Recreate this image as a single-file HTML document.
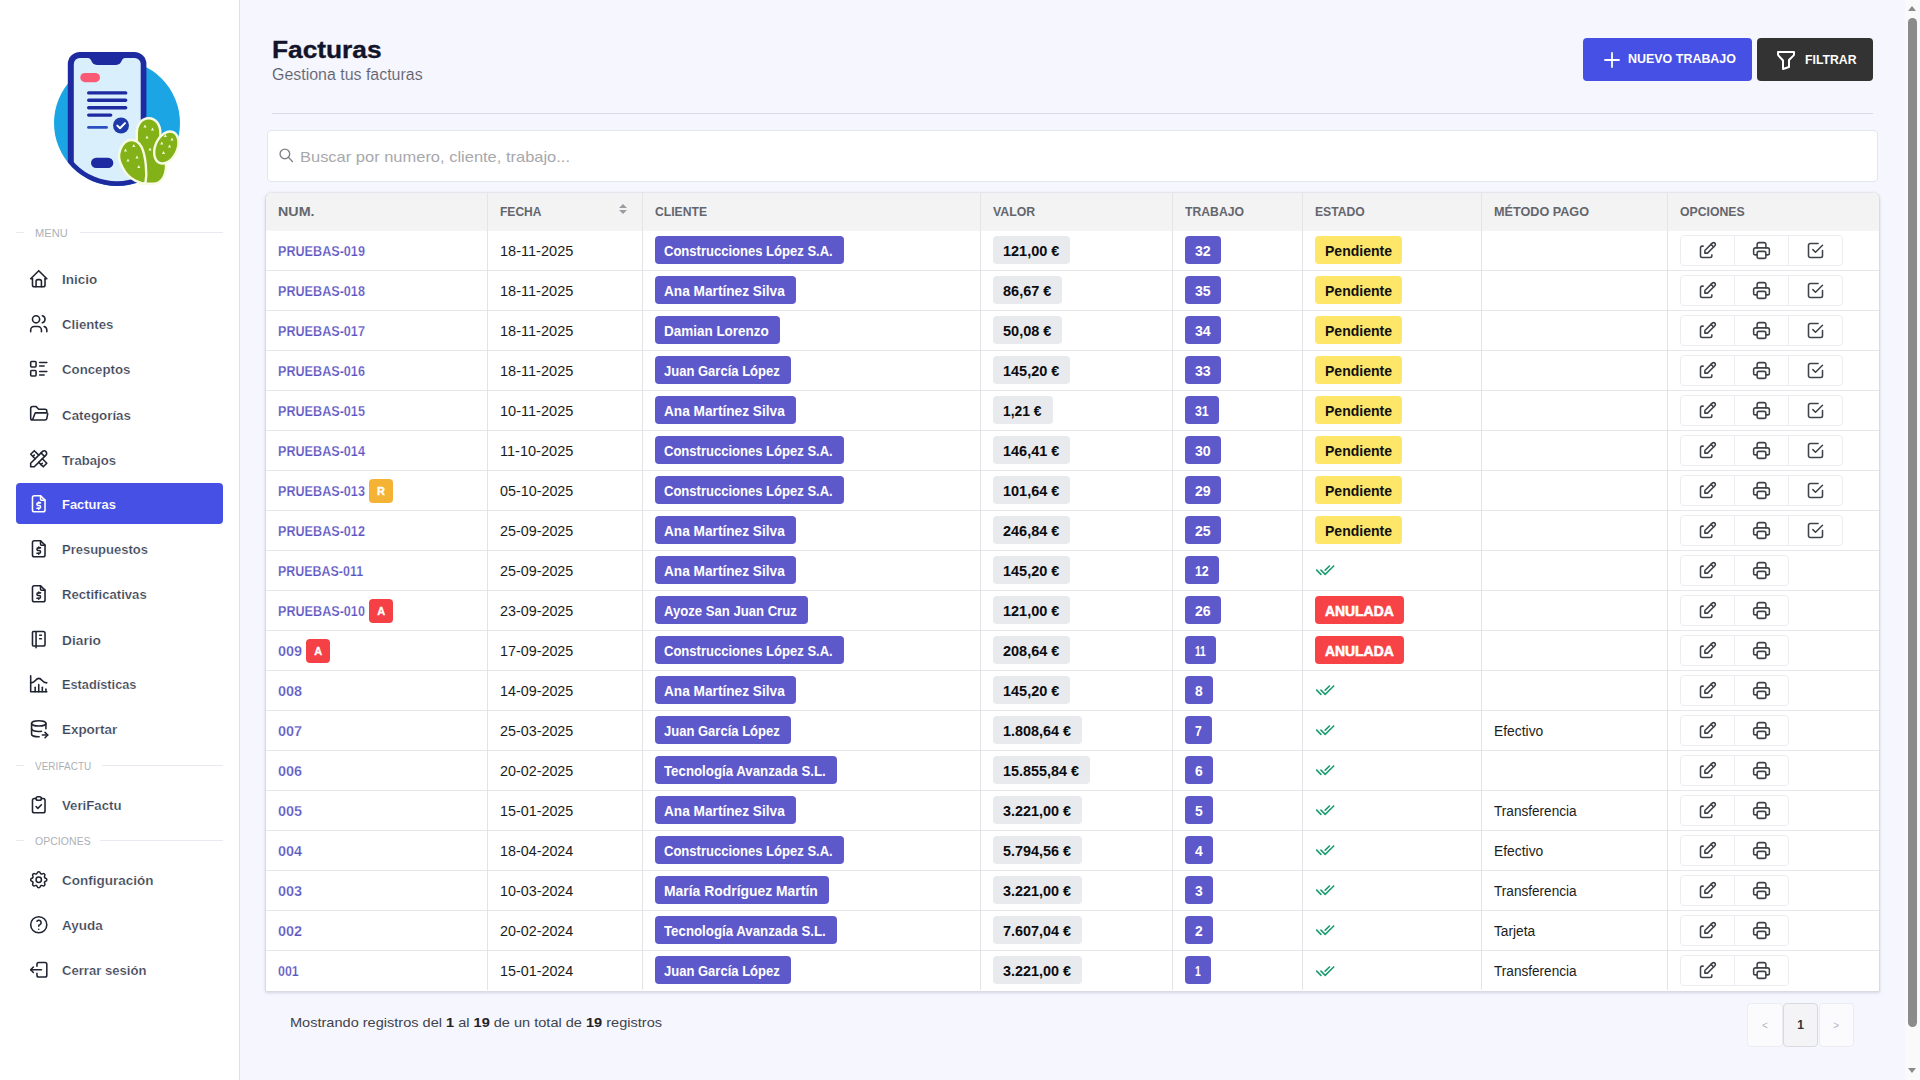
<!DOCTYPE html>
<html lang="es"><head><meta charset="utf-8"><title>Facturas</title>
<style>
*{box-sizing:border-box;margin:0;padding:0}
html,body{width:1920px;height:1080px;overflow:hidden}
body{font-family:"Liberation Sans",sans-serif;background:#f6f6fe;color:#212529;position:relative;font-size:14px}
a{text-decoration:none;color:inherit}
#side{position:absolute;left:0;top:0;width:240px;height:1080px;background:#fff;border-right:1px solid #dedfe9}
#logo{position:absolute;left:40px;top:40px;width:160px;height:160px}
.sec{position:absolute;left:0;width:240px;height:14px}
.sec b{position:absolute;left:35px;top:0;font-size:11px;font-weight:400;color:#adafb5;line-height:14px;letter-spacing:0.1px}
.sec i{position:absolute;top:6px;height:1px;background:#e9eaf1}
.sec .l1{left:16px;width:8px}
.sec .l2{right:17px}
.fx{display:inline-block;transform-origin:0 50%;white-space:nowrap}
.mi{position:absolute;left:16px;width:207px;height:41px;border-radius:4px;color:#3a4354;font-size:13.6px;font-weight:700}
.mi svg{position:absolute;left:12.1px;top:10.3px;color:#1f2430}
.mi>span{position:absolute;left:46.3px;top:0;line-height:45.8px;white-space:nowrap;-webkit-text-stroke:.22px #fff}
.mi.act>span{-webkit-text-stroke:.1px #4650e5}
.mi.act{background:#4650e5;color:#fff}
.mi.act svg{color:#fff}
#main{position:absolute;left:240px;top:0;width:1665px;height:1080px}
#main>*{position:absolute}
h1{left:32px;top:34px;font-size:24px;line-height:32px;font-weight:700;color:#12142a;-webkit-text-stroke:.35px #12142a}
#sub{left:32px;top:65.2px;font-size:16px;line-height:20px;color:#5d616c;-webkit-text-stroke:.12px #f6f6fe}
#bnew,#bfil{top:38px;height:43px;border-radius:4px;color:#fff;font-weight:700;font-size:12px}
#bnew{left:1343px;width:169px;background:#4650e5}
#bfil{left:1517px;width:116px;background:#333}
#bnew svg{position:absolute;left:17px;top:10px}
#bnew>span{position:absolute;left:45px;top:0;line-height:42px}
#bfil svg{position:absolute;left:17px;top:10px}
#bfil>span{position:absolute;left:48px;top:0;line-height:44px}
#hr{left:32px;top:113px;width:1601px;height:1px;background:#d9dbe7}
#search{left:27px;top:130px;width:1611px;height:52px;background:#fff;border:1px solid #e4e5ee;border-radius:4px}
#search svg{position:absolute;left:10.1px;top:16.4px;color:#808289}
#search>span{position:absolute;left:31.5px;top:0;line-height:52px;font-size:15px;color:#a7a8ac}
#tw{left:25px;top:192px;width:1615px;height:800px;background:#fff;border-radius:7px 7px 2px 2px;border:1px solid #dadbe2;border-top-color:#e6e7ec;box-shadow:0 1px 3px rgba(120,120,160,.25);overflow:hidden}
table{border-collapse:collapse;table-layout:fixed;width:1614px;margin:-1px 0 0 -1px}
th{height:38px;background:#f3f3f4;text-align:left;padding:1.4px 0 0 12.5px;font-size:13.4px;font-weight:700;color:#63666d;border-left:1px solid #e4e5e8;position:relative}
td{height:40px;padding:0 0 0 12.5px;border-left:1px solid #e3e4e8;border-top:1px solid #e6e7ea;font-size:14px;color:#1b1d21;white-space:nowrap;vertical-align:middle}
th:first-child,td:first-child{border-left:0;padding-left:13px}
td>.fx,.num{position:relative;top:1px}
tbody tr:first-child td{border-top-color:#f6f6f7}
.num .fx{top:0}
.num{color:#5b52c2;font-weight:700;-webkit-text-stroke:.25px #fff}
.nw{display:inline-flex;align-items:center;height:24px;position:relative;top:1px}
.nw .num{top:0}
.bd{display:inline-block;height:28px;line-height:30px;padding:0 10px;white-space:nowrap;border-radius:4px;font-weight:700;font-size:14px;vertical-align:middle}
.cli,.trab{background:#5e59cb;color:#fff}
.trab{padding-right:10.6px}
.cli{padding-left:9.4px;padding-right:10.6px}
.val{background:#e9eaee;color:#0c0c0e;padding-right:11px}
.pend{background:#fde668;color:#111}
.anul{background:#f84346;color:#fff;-webkit-text-stroke:.55px #fff;padding-right:10.5px}
.fl{display:inline-block;width:24px;height:24px;line-height:24.5px;text-align:center;border-radius:4px;color:#fff;font-weight:700;font-size:11px;margin-left:4px;-webkit-text-stroke:.3px #fff}
.fa{width:24.5px}
.fr{background:#f5b335}
.fa{background:#f54046}
.chk{color:#1e9c74;vertical-align:middle;margin-left:0;position:relative;top:.5px}
.bg{display:inline-flex;border:1px solid #ecedf1;border-radius:4px;height:31px;vertical-align:middle}
.b{display:inline-block;width:53.5px;height:29px;border-left:1px solid #ecedf1;text-align:center;color:#3f4249}
.b:first-child{border-left:0;width:52.7px}
.b:nth-child(2){width:54.1px}
.b:nth-child(3){width:54.6px}
.b svg{margin-top:4px}
.sort{position:absolute;right:15px;top:12px;width:8px;height:12px}
.sort i{position:absolute;left:0;width:0;height:0;border-left:4px solid transparent;border-right:4px solid transparent}
.sort .up{top:0;border-bottom:4.5px solid #9a9ca3}
.sort .dn{top:6px;border-top:4.5px solid #9a9ca3}
#info{left:50px;top:1013px;font-size:13.5px;line-height:20px;color:#40434a}
#info b{color:#222}
#pag{left:1507.3px;top:1003px;height:43.5px;white-space:nowrap;font-size:0}
.pg{display:inline-block;width:35.4px;height:43.5px;line-height:43px;text-align:center;border:1px solid #ececf3;border-radius:4px;background:#fbfbfe;color:#b3b4ba;font-size:10px;margin-right:.25px}
.pg.cur{background:#f4f4f6;border-color:#d9dae0;color:#333;font-weight:700;font-size:12px}
#sb{position:absolute;left:1905px;top:0;width:15px;height:1080px;background:#fafafa}
#sb .th{position:absolute;left:3px;top:18px;width:9px;height:1009px;border-radius:4.5px;background:#8b8b8b}
#sb .au,#sb .ad{position:absolute;left:3px;width:0;height:0;border-left:4.5px solid transparent;border-right:4.5px solid transparent}
#sb .au{top:6px;border-bottom:5px solid #8b8b8b}
#sb .ad{top:1068px;border-top:5px solid #8b8b8b}

</style></head><body>
<div id="side">
<div id="logo"><svg width="160" height="160" viewBox="40 40 160 160">
<defs><clipPath id="cc"><path d="M40 40H200V123H180A63 63 0 0 1 54 123H40Z"/></clipPath>
<clipPath id="cs"><path d="M40 40H200V123H175.300A58.300 58.300 0 0 1 58.700 123H40Z"/></clipPath><clipPath id="cb"><path d="M100 100H200V183.800H100Z"/></clipPath></defs>
<circle cx="117" cy="123" r="63" fill="#1ba5e5"/>
<g clip-path="url(#cc)"><rect x="67.800" y="51.900" width="78.600" height="150" rx="12" fill="#1e2aa0"/></g>
<g clip-path="url(#cs)"><rect x="73.800" y="58" width="66.900" height="150" rx="6" fill="#d9f0fc"/></g>
<path d="M88 57h37v1c-1.500 0-2.500 1-3.200 2.600c-1 2.600-2.600 4.400-5.800 4.400h-19c-3.200 0-4.800-1.800-5.800-4.400c-.7-1.600-1.700-2.600-3.200-2.600z" fill="#1e2aa0"/>
<rect x="80.300" y="72.900" width="19.700" height="9.300" rx="4.650" fill="#fb5a74"/>
<g stroke="#1e2aa0" stroke-width="3.400" stroke-linecap="round"><path d="M88.700 92.900h37M88.700 100.300h37M88.700 107.700h37M88.700 115.100h22"/></g>
<path d="M88.500 127.400h18" stroke="#2b4fc0" stroke-width="2.800" stroke-linecap="round"/>
<circle cx="121" cy="125.500" r="8" fill="#1f3aa8"/>
<path d="M117.300 125.600l2.700 2.700l5-5.200" fill="none" stroke="#fff" stroke-width="2" stroke-linecap="round" stroke-linejoin="round"/>
<rect x="91" y="157.800" width="22.300" height="10.300" rx="5.150" fill="#1e2aa0"/>
<g fill="#82b118" stroke="#f7fbe3" stroke-width="2.400" stroke-linejoin="round">
<path d="M148.700 118.200C155.800 118.200 160.600 124.500 160.400 134C160.200 142 162.300 150 164.800 158C166.800 165 166.300 172 163.300 177.500C160.800 182 157 183.800 153 183.800L140 183.800C137 183.800 136.800 175 136.800 165L136.800 133C136.800 124.500 141.800 118.200 148.700 118.200Z"/>
<ellipse cx="166.300" cy="147.500" rx="11" ry="16.800" transform="rotate(24 166.300 147.500)"/>
<path d="M131.500 140C127.500 140 123 143 120.500 149C118 155 119.500 162 122.200 166.700C125 172.500 130 178 135.200 180.600C138.500 182.300 141.500 183.500 145.400 183.500C146.400 178 146.400 170 145.800 164.800C145 157 143.500 151 141.700 147.200C139.500 143 136 140 131.500 140Z"/>
</g>
<g fill="#eef8cc"><path d="M145 124.500l1.600 3.100h-3.200zM152.500 127.500l1.600 3.100h-3.200zM147 135.500l1.600 3.100h-3.200zM150 147.500l1.600 3.100h-3.200zM125.500 148.500l1.600 3.100h-3.200zM133.800 144l1.600 3.100h-3.200zM137 155.500l1.600 3.100h-3.200zM128 158.500l1.600 3.100h-3.200zM138.800 165l1.600 3.100h-3.200zM165.300 134l1.600 3.100h-3.200zM172 137.500l1.600 3.100h-3.200zM161.800 141.500l1.600 3.100h-3.200zM169.500 144.500l1.600 3.100h-3.200zM163.500 151l1.600 3.100h-3.200z"/></g>
</svg>
</div>
<div class="sec" style="top:226px"><i class="l1"></i><b><span class="fx" style="transform:scaleX(1.0034);margin-right:0.11px">MENU</span></b><i class="l2" style="left:80px"></i></div>
<div class="sec" style="top:759px"><i class="l1"></i><b><span class="fx" style="transform:scaleX(0.8990);margin-right:-6.23px">VERIFACTU</span></b><i class="l2" style="left:102px"></i></div>
<div class="sec" style="top:834px"><i class="l1"></i><b><span class="fx" style="transform:scaleX(0.9470);margin-right:-3.08px">OPCIONES</span></b><i class="l2" style="left:100px"></i></div>
<a class="mi" style="top:258px"><svg class="mic" width="21.5" height="21.5" viewBox="0 0 24 24" fill="none" stroke="currentColor" stroke-width="1.75" stroke-linecap="round" stroke-linejoin="round" ><path d="M5 12l-2 0l9 -9l9 9l-2 0"/><path d="M5 12v7a2 2 0 0 0 2 2h10a2 2 0 0 0 2 -2v-7"/><path d="M9 21v-6a2 2 0 0 1 2 -2h2a2 2 0 0 1 2 2v6"/></svg><span style="top:-1px"><span class="fx" style="transform:scaleX(0.9915);margin-right:-0.30px">Inicio</span></span></a>
<a class="mi" style="top:303px"><svg class="mic" width="21.5" height="21.5" viewBox="0 0 24 24" fill="none" stroke="currentColor" stroke-width="1.75" stroke-linecap="round" stroke-linejoin="round" ><path d="M9 7m-4 0a4 4 0 1 0 8 0a4 4 0 1 0 -8 0"/><path d="M3 21v-2a4 4 0 0 1 4 -4h4a4 4 0 0 1 4 4v2"/><path d="M16 3.13a4 4 0 0 1 0 7.75"/><path d="M21 21v-2a4 4 0 0 0 -3 -3.85"/></svg><span style="top:-1px"><span class="fx" style="transform:scaleX(0.9728);margin-right:-1.44px">Clientes</span></span></a>
<a class="mi" style="top:348px"><svg class="mic" width="21.5" height="21.5" viewBox="0 0 24 24" fill="none" stroke="currentColor" stroke-width="1.75" stroke-linecap="round" stroke-linejoin="round" ><path d="M13 5h8"/><path d="M13 9h5"/><path d="M13 15h8"/><path d="M13 19h5"/><path d="M3 4m0 1a1 1 0 0 1 1 -1h4a1 1 0 0 1 1 1v4a1 1 0 0 1 -1 1h-4a1 1 0 0 1 -1 -1z"/><path d="M3 14m0 1a1 1 0 0 1 1 -1h4a1 1 0 0 1 1 1v4a1 1 0 0 1 -1 1h-4a1 1 0 0 1 -1 -1z"/></svg><span style="top:-1px"><span class="fx" style="transform:scaleX(0.9744);margin-right:-1.80px">Conceptos</span></span></a>
<a class="mi" style="top:393px"><svg class="mic" width="21.5" height="21.5" viewBox="0 0 24 24" fill="none" stroke="currentColor" stroke-width="1.75" stroke-linecap="round" stroke-linejoin="round" ><path d="M5 19l2.757 -7.351a1 1 0 0 1 .936 -.649h12.307a1 1 0 0 1 .986 1.164l-.996 5.211a2 2 0 0 1 -1.964 1.625h-14.026a2 2 0 0 1 -2 -2v-11a2 2 0 0 1 2 -2h4l3 3h7a2 2 0 0 1 2 2v2"/></svg><span><span class="fx" style="transform:scaleX(0.9813);margin-right:-1.32px">Categorías</span></span></a>
<a class="mi" style="top:438px"><svg class="mic" width="21.5" height="21.5" viewBox="0 0 24 24" fill="none" stroke="currentColor" stroke-width="1.75" stroke-linecap="round" stroke-linejoin="round" ><path d="M3 21h4l13 -13a1.5 1.5 0 0 0 -4 -4l-13 13v4"/><path d="M14.5 5.5l4 4"/><path d="M12 8l-5 -5l-4 4l5 5"/><path d="M7 8l-1.5 1.5"/><path d="M16 12l5 5l-4 4l-5 -5"/><path d="M16 17l-1.5 1.5"/></svg><span><span class="fx" style="transform:scaleX(0.9647);margin-right:-1.97px">Trabajos</span></span></a>
<a class="mi act" style="top:483px"><svg class="mic" width="21.5" height="21.5" viewBox="0 0 24 24" fill="none" stroke="currentColor" stroke-width="1.75" stroke-linecap="round" stroke-linejoin="round" ><path d="M14 3v4a1 1 0 0 0 1 1h4"/><path d="M17 21h-10a2 2 0 0 1 -2 -2v-14a2 2 0 0 1 2 -2h7l5 5v11a2 2 0 0 1 -2 2z"/><path d="M14 11h-2.5a1.5 1.5 0 0 0 0 3h1a1.5 1.5 0 0 1 0 3h-2.5"/><path d="M12 17v1m0 -8v1"/></svg><span style="top:-1px"><span class="fx" style="transform:scaleX(0.9520);margin-right:-2.72px">Facturas</span></span></a>
<a class="mi" style="top:528px"><svg class="mic" width="21.5" height="21.5" viewBox="0 0 24 24" fill="none" stroke="currentColor" stroke-width="1.75" stroke-linecap="round" stroke-linejoin="round" ><path d="M14 3v4a1 1 0 0 0 1 1h4"/><path d="M17 21h-10a2 2 0 0 1 -2 -2v-14a2 2 0 0 1 2 -2h7l5 5v11a2 2 0 0 1 -2 2z"/><path d="M14 11h-2.5a1.5 1.5 0 0 0 0 3h1a1.5 1.5 0 0 1 0 3h-2.5"/><path d="M12 17v1m0 -8v1"/></svg><span style="top:-1px"><span class="fx" style="transform:scaleX(0.9560);margin-right:-3.96px">Presupuestos</span></span></a>
<a class="mi" style="top:573px"><svg class="mic" width="21.5" height="21.5" viewBox="0 0 24 24" fill="none" stroke="currentColor" stroke-width="1.75" stroke-linecap="round" stroke-linejoin="round" ><path d="M14 3v4a1 1 0 0 0 1 1h4"/><path d="M17 21h-10a2 2 0 0 1 -2 -2v-14a2 2 0 0 1 2 -2h7l5 5v11a2 2 0 0 1 -2 2z"/><path d="M14 11h-2.5a1.5 1.5 0 0 0 0 3h1a1.5 1.5 0 0 1 0 3h-2.5"/><path d="M12 17v1m0 -8v1"/></svg><span style="top:-1px"><span class="fx" style="transform:scaleX(0.9663);margin-right:-2.96px">Rectificativas</span></span></a>
<a class="mi" style="top:618px"><svg class="mic" width="21.5" height="21.5" viewBox="0 0 24 24" fill="none" stroke="currentColor" stroke-width="1.75" stroke-linecap="round" stroke-linejoin="round" ><path d="M6 4h11a2 2 0 0 1 2 2v12a2 2 0 0 1 -2 2h-11a1 1 0 0 1 -1 -1v-14a1 1 0 0 1 1 -1m3 0v18"/><path d="M13 8l2 0"/><path d="M13 12l2 0"/></svg><span><span class="fx" style="transform:scaleX(1.0109);margin-right:0.42px">Diario</span></span></a>
<a class="mi" style="top:663px"><svg class="mic" width="21.5" height="21.5" viewBox="0 0 24 24" fill="none" stroke="currentColor" stroke-width="1.75" stroke-linecap="round" stroke-linejoin="round" ><path d="M3 3v18h18"/><path d="M20 18v3"/><path d="M16 16v5"/><path d="M12 13v8"/><path d="M8 16v5"/><path d="M3 11c6 0 5 -5 9 -5s3 5 9 5"/></svg><span style="top:-1px"><span class="fx" style="transform:scaleX(0.9383);margin-right:-4.89px">Estadísticas</span></span></a>
<a class="mi" style="top:708px"><svg class="mic" width="21.5" height="21.5" viewBox="0 0 24 24" fill="none" stroke="currentColor" stroke-width="1.75" stroke-linecap="round" stroke-linejoin="round" ><path d="M4 6c0 1.657 3.582 3 8 3s8 -1.343 8 -3s-3.582 -3 -8 -3s-8 1.343 -8 3"/><path d="M4 6v6c0 1.657 3.582 3 8 3c1.118 0 2.183 -.086 3.15 -.241"/><path d="M20 12v-6"/><path d="M4 12v6c0 1.657 3.582 3 8 3c.157 0 .312 -.002 .466 -.005"/><path d="M16 19h6"/><path d="M19 16l3 3l-3 3"/></svg><span style="top:-1px"><span class="fx" style="transform:scaleX(0.9874);margin-right:-0.71px">Exportar</span></span></a>
<a class="mi" style="top:784px"><svg class="mic" width="21.5" height="21.5" viewBox="0 0 24 24" fill="none" stroke="currentColor" stroke-width="1.75" stroke-linecap="round" stroke-linejoin="round" ><path d="M9 5h-2a2 2 0 0 0 -2 2v12a2 2 0 0 0 2 2h10a2 2 0 0 0 2 -2v-12a2 2 0 0 0 -2 -2h-2"/><path d="M9 3m0 2a2 2 0 0 1 2 -2h2a2 2 0 0 1 2 2v0a2 2 0 0 1 -2 2h-2a2 2 0 0 1 -2 -2z"/><path d="M9 14l2 2l4 -4"/></svg><span style="top:-1px"><span class="fx" style="transform:scaleX(0.9714);margin-right:-1.75px">VeriFactu</span></span></a>
<a class="mi" style="top:859px"><svg class="mic" width="21.5" height="21.5" viewBox="0 0 24 24" fill="none" stroke="currentColor" stroke-width="1.75" stroke-linecap="round" stroke-linejoin="round" ><path d="M10.325 4.317c.426 -1.756 2.924 -1.756 3.35 0a1.724 1.724 0 0 0 2.573 1.066c1.543 -.94 3.31 .826 2.37 2.37a1.724 1.724 0 0 0 1.065 2.572c1.756 .426 1.756 2.924 0 3.35a1.724 1.724 0 0 0 -1.066 2.573c.94 1.543 -.826 3.31 -2.37 2.37a1.724 1.724 0 0 0 -2.572 1.065c-.426 1.756 -2.924 1.756 -3.35 0a1.724 1.724 0 0 0 -2.573 -1.066c-1.543 .94 -3.31 -.826 -2.37 -2.37a1.724 1.724 0 0 0 -1.065 -2.572c-1.756 -.426 -1.756 -2.924 0 -3.35a1.724 1.724 0 0 0 1.066 -2.573c-.94 -1.543 .826 -3.31 2.37 -2.37c1 .608 2.296 .07 2.572 -1.065z"/><path d="M9 12a3 3 0 1 0 6 0a3 3 0 0 0 -6 0"/></svg><span style="top:-1px"><span class="fx" style="transform:scaleX(0.9925);margin-right:-0.69px">Configuración</span></span></a>
<a class="mi" style="top:904px"><svg class="mic" width="21.5" height="21.5" viewBox="0 0 24 24" fill="none" stroke="currentColor" stroke-width="1.75" stroke-linecap="round" stroke-linejoin="round" ><path d="M12 12m-9 0a9 9 0 1 0 18 0a9 9 0 1 0 -18 0"/><path d="M12 17l0 .01"/><path d="M12 13.5a1.5 1.5 0 0 1 1 -1.5a2.6 2.6 0 1 0 -3 -4"/></svg><span style="top:-1px"><span class="fx" style="transform:scaleX(0.9915);margin-right:-0.35px">Ayuda</span></span></a>
<a class="mi" style="top:949px"><svg class="mic" width="21.5" height="21.5" viewBox="0 0 24 24" fill="none" stroke="currentColor" stroke-width="1.75" stroke-linecap="round" stroke-linejoin="round" ><path d="M10 8v-2a2 2 0 0 1 2 -2h7a2 2 0 0 1 2 2v12a2 2 0 0 1 -2 2h-7a2 2 0 0 1 -2 -2v-2"/><path d="M15 12h-12l3 -3"/><path d="M6 15l-3 -3"/></svg><span style="top:-1px"><span class="fx" style="transform:scaleX(0.9634);margin-right:-3.21px">Cerrar sesión</span></span></a>
</div>
<div id="main">
<h1><span class="fx" style="transform:scaleX(1.0955);margin-right:9.55px">Facturas</span></h1>
<p id="sub"><span class="fx" style="transform:scaleX(0.9961);margin-right:-0.59px">Gestiona tus facturas</span></p>
<a id="bnew"><svg class="" width="24" height="24" viewBox="0 0 24 24" fill="none" stroke="currentColor" stroke-width="1.8" stroke-linecap="round" stroke-linejoin="round" ><path d="M12 5l0 14"/><path d="M5 12l14 0"/></svg><span><span class="fx" style="transform:scaleX(1.0383);margin-right:3.98px">NUEVO TRABAJO</span></span></a>
<a id="bfil"><svg class="" width="24" height="24" viewBox="0 0 24 24" fill="none" stroke="currentColor" stroke-width="2" stroke-linecap="round" stroke-linejoin="round" ><path d="M4 4h16v2.172a2 2 0 0 1 -.586 1.414l-4.414 4.414v7l-6 2v-8.5l-4.48 -4.928a2 2 0 0 1 -.52 -1.345v-2.227z"/></svg><span><span class="fx" style="transform:scaleX(1.0211);margin-right:1.06px">FILTRAR</span></span></a>
<div id="hr"></div>
<div id="search"><svg class="" width="16.5" height="16.5" viewBox="0 0 24 24" fill="none" stroke="currentColor" stroke-width="2" stroke-linecap="round" stroke-linejoin="round" ><path d="M10 10m-7 0a7 7 0 1 0 14 0a7 7 0 1 0 -14 0"/><path d="M21 21l-6 -6"/></svg><span><span class="fx" style="transform:scaleX(1.0977);margin-right:24.03px">Buscar por numero, cliente, trabajo...</span></span></div>
<div id="tw"><table>
<colgroup><col style="width:222px"><col style="width:155px"><col style="width:338px"><col style="width:192px"><col style="width:130px"><col style="width:179px"><col style="width:186px"><col style="width:212px"></colgroup>
<thead><tr><th><span class="fx" style="transform:scaleX(1.0667);margin-right:2.28px">NUM.</span></th><th><span class="fx" style="transform:scaleX(0.8997);margin-right:-4.62px">FECHA</span><span class="sort"><i class="up"></i><i class="dn"></i></span></th><th><span class="fx" style="transform:scaleX(0.9076);margin-right:-5.30px">CLIENTE</span></th><th><span class="fx" style="transform:scaleX(0.9210);margin-right:-3.62px">VALOR</span></th><th><span class="fx" style="transform:scaleX(0.9114);margin-right:-5.73px">TRABAJO</span></th><th><span class="fx" style="transform:scaleX(0.9076);margin-right:-5.06px">ESTADO</span></th><th><span class="fx" style="transform:scaleX(0.9435);margin-right:-5.69px">MÉTODO PAGO</span></th><th><span class="fx" style="transform:scaleX(0.9153);margin-right:-5.99px">OPCIONES</span></th></tr></thead>
<tbody>
<tr><td><span class="nw"><a class="num"><span class="fx" style="transform:scaleX(0.9007);margin-right:-9.58px">PRUEBAS-019</span></a></span></td><td><span class="fx" style="transform:scaleX(1.0386);margin-right:2.72px">18-11-2025</span></td><td><span class="bd cli"><span class="fx" style="transform:scaleX(0.9310);margin-right:-12.50px">Construcciones López S.A.</span></span></td><td><span class="bd val"><span class="fx" style="transform:scaleX(1.0349);margin-right:1.90px">121,00 €</span></span></td><td><span class="bd trab"><span class="fx" style="transform:scaleX(1.0110);margin-right:0.17px">32</span></span></td><td><span class="bd pend"><span class="fx" style="transform:scaleX(1.0014);margin-right:0.09px">Pendiente</span></span></td><td></td><td><span class="bg"><span class="b"><svg class="" width="21" height="21" viewBox="0 0 24 24" fill="none" stroke="currentColor" stroke-width="1.78" stroke-linecap="round" stroke-linejoin="round" ><path d="M7 7h-1a2 2 0 0 0 -2 2v9a2 2 0 0 0 2 2h9a2 2 0 0 0 2 -2v-1"/><path d="M20.385 6.585a2.1 2.1 0 0 0 -2.97 -2.97l-8.415 8.385v3h3l8.385 -8.415z"/><path d="M16 5l3 3"/></svg></span><span class="b"><svg class="" width="21" height="21" viewBox="0 0 24 24" fill="none" stroke="currentColor" stroke-width="1.78" stroke-linecap="round" stroke-linejoin="round" ><path d="M17 17h2a2 2 0 0 0 2 -2v-4a2 2 0 0 0 -2 -2h-14a2 2 0 0 0 -2 2v4a2 2 0 0 0 2 2h2"/><path d="M17 9v-4a2 2 0 0 0 -2 -2h-6a2 2 0 0 0 -2 2v4"/><path d="M7 13m0 2a2 2 0 0 1 2 -2h6a2 2 0 0 1 2 2v4a2 2 0 0 1 -2 2h-6a2 2 0 0 1 -2 -2z"/></svg></span><span class="b"><svg class="" width="21" height="21" viewBox="0 0 24 24" fill="none" stroke="currentColor" stroke-width="1.78" stroke-linecap="round" stroke-linejoin="round" ><path d="M9 11l3 3l8 -8"/><path d="M20 12v6a2 2 0 0 1 -2 2h-12a2 2 0 0 1 -2 -2v-12a2 2 0 0 1 2 -2h9"/></svg></span></span></td></tr>
<tr><td><span class="nw"><a class="num"><span class="fx" style="transform:scaleX(0.9007);margin-right:-9.58px">PRUEBAS-018</span></a></span></td><td><span class="fx" style="transform:scaleX(1.0386);margin-right:2.72px">18-11-2025</span></td><td><span class="bd cli"><span class="fx" style="transform:scaleX(0.9761);margin-right:-2.95px">Ana Martínez Silva</span></span></td><td><span class="bd val"><span class="fx" style="transform:scaleX(1.0360);margin-right:1.68px">86,67 €</span></span></td><td><span class="bd trab"><span class="fx" style="transform:scaleX(1.0110);margin-right:0.17px">35</span></span></td><td><span class="bd pend"><span class="fx" style="transform:scaleX(1.0014);margin-right:0.09px">Pendiente</span></span></td><td></td><td><span class="bg"><span class="b"><svg class="" width="21" height="21" viewBox="0 0 24 24" fill="none" stroke="currentColor" stroke-width="1.78" stroke-linecap="round" stroke-linejoin="round" ><path d="M7 7h-1a2 2 0 0 0 -2 2v9a2 2 0 0 0 2 2h9a2 2 0 0 0 2 -2v-1"/><path d="M20.385 6.585a2.1 2.1 0 0 0 -2.97 -2.97l-8.415 8.385v3h3l8.385 -8.415z"/><path d="M16 5l3 3"/></svg></span><span class="b"><svg class="" width="21" height="21" viewBox="0 0 24 24" fill="none" stroke="currentColor" stroke-width="1.78" stroke-linecap="round" stroke-linejoin="round" ><path d="M17 17h2a2 2 0 0 0 2 -2v-4a2 2 0 0 0 -2 -2h-14a2 2 0 0 0 -2 2v4a2 2 0 0 0 2 2h2"/><path d="M17 9v-4a2 2 0 0 0 -2 -2h-6a2 2 0 0 0 -2 2v4"/><path d="M7 13m0 2a2 2 0 0 1 2 -2h6a2 2 0 0 1 2 2v4a2 2 0 0 1 -2 2h-6a2 2 0 0 1 -2 -2z"/></svg></span><span class="b"><svg class="" width="21" height="21" viewBox="0 0 24 24" fill="none" stroke="currentColor" stroke-width="1.78" stroke-linecap="round" stroke-linejoin="round" ><path d="M9 11l3 3l8 -8"/><path d="M20 12v6a2 2 0 0 1 -2 2h-12a2 2 0 0 1 -2 -2v-12a2 2 0 0 1 2 -2h9"/></svg></span></span></td></tr>
<tr><td><span class="nw"><a class="num"><span class="fx" style="transform:scaleX(0.9007);margin-right:-9.58px">PRUEBAS-017</span></a></span></td><td><span class="fx" style="transform:scaleX(1.0386);margin-right:2.72px">18-11-2025</span></td><td><span class="bd cli"><span class="fx" style="transform:scaleX(0.9618);margin-right:-4.16px">Damian Lorenzo</span></span></td><td><span class="bd val"><span class="fx" style="transform:scaleX(1.0360);margin-right:1.68px">50,08 €</span></span></td><td><span class="bd trab"><span class="fx" style="transform:scaleX(1.0110);margin-right:0.17px">34</span></span></td><td><span class="bd pend"><span class="fx" style="transform:scaleX(1.0014);margin-right:0.09px">Pendiente</span></span></td><td></td><td><span class="bg"><span class="b"><svg class="" width="21" height="21" viewBox="0 0 24 24" fill="none" stroke="currentColor" stroke-width="1.78" stroke-linecap="round" stroke-linejoin="round" ><path d="M7 7h-1a2 2 0 0 0 -2 2v9a2 2 0 0 0 2 2h9a2 2 0 0 0 2 -2v-1"/><path d="M20.385 6.585a2.1 2.1 0 0 0 -2.97 -2.97l-8.415 8.385v3h3l8.385 -8.415z"/><path d="M16 5l3 3"/></svg></span><span class="b"><svg class="" width="21" height="21" viewBox="0 0 24 24" fill="none" stroke="currentColor" stroke-width="1.78" stroke-linecap="round" stroke-linejoin="round" ><path d="M17 17h2a2 2 0 0 0 2 -2v-4a2 2 0 0 0 -2 -2h-14a2 2 0 0 0 -2 2v4a2 2 0 0 0 2 2h2"/><path d="M17 9v-4a2 2 0 0 0 -2 -2h-6a2 2 0 0 0 -2 2v4"/><path d="M7 13m0 2a2 2 0 0 1 2 -2h6a2 2 0 0 1 2 2v4a2 2 0 0 1 -2 2h-6a2 2 0 0 1 -2 -2z"/></svg></span><span class="b"><svg class="" width="21" height="21" viewBox="0 0 24 24" fill="none" stroke="currentColor" stroke-width="1.78" stroke-linecap="round" stroke-linejoin="round" ><path d="M9 11l3 3l8 -8"/><path d="M20 12v6a2 2 0 0 1 -2 2h-12a2 2 0 0 1 -2 -2v-12a2 2 0 0 1 2 -2h9"/></svg></span></span></td></tr>
<tr><td><span class="nw"><a class="num"><span class="fx" style="transform:scaleX(0.9007);margin-right:-9.58px">PRUEBAS-016</span></a></span></td><td><span class="fx" style="transform:scaleX(1.0386);margin-right:2.72px">18-11-2025</span></td><td><span class="bd cli"><span class="fx" style="transform:scaleX(0.9298);margin-right:-8.73px">Juan García López</span></span></td><td><span class="bd val"><span class="fx" style="transform:scaleX(1.0349);margin-right:1.90px">145,20 €</span></span></td><td><span class="bd trab"><span class="fx" style="transform:scaleX(1.0110);margin-right:0.17px">33</span></span></td><td><span class="bd pend"><span class="fx" style="transform:scaleX(1.0014);margin-right:0.09px">Pendiente</span></span></td><td></td><td><span class="bg"><span class="b"><svg class="" width="21" height="21" viewBox="0 0 24 24" fill="none" stroke="currentColor" stroke-width="1.78" stroke-linecap="round" stroke-linejoin="round" ><path d="M7 7h-1a2 2 0 0 0 -2 2v9a2 2 0 0 0 2 2h9a2 2 0 0 0 2 -2v-1"/><path d="M20.385 6.585a2.1 2.1 0 0 0 -2.97 -2.97l-8.415 8.385v3h3l8.385 -8.415z"/><path d="M16 5l3 3"/></svg></span><span class="b"><svg class="" width="21" height="21" viewBox="0 0 24 24" fill="none" stroke="currentColor" stroke-width="1.78" stroke-linecap="round" stroke-linejoin="round" ><path d="M17 17h2a2 2 0 0 0 2 -2v-4a2 2 0 0 0 -2 -2h-14a2 2 0 0 0 -2 2v4a2 2 0 0 0 2 2h2"/><path d="M17 9v-4a2 2 0 0 0 -2 -2h-6a2 2 0 0 0 -2 2v4"/><path d="M7 13m0 2a2 2 0 0 1 2 -2h6a2 2 0 0 1 2 2v4a2 2 0 0 1 -2 2h-6a2 2 0 0 1 -2 -2z"/></svg></span><span class="b"><svg class="" width="21" height="21" viewBox="0 0 24 24" fill="none" stroke="currentColor" stroke-width="1.78" stroke-linecap="round" stroke-linejoin="round" ><path d="M9 11l3 3l8 -8"/><path d="M20 12v6a2 2 0 0 1 -2 2h-12a2 2 0 0 1 -2 -2v-12a2 2 0 0 1 2 -2h9"/></svg></span></span></td></tr>
<tr><td><span class="nw"><a class="num"><span class="fx" style="transform:scaleX(0.9007);margin-right:-9.58px">PRUEBAS-015</span></a></span></td><td><span class="fx" style="transform:scaleX(1.0386);margin-right:2.72px">10-11-2025</span></td><td><span class="bd cli"><span class="fx" style="transform:scaleX(0.9761);margin-right:-2.95px">Ana Martínez Silva</span></span></td><td><span class="bd val"><span class="fx" style="transform:scaleX(0.9888);margin-right:-0.44px">1,21 €</span></span></td><td><span class="bd trab"><span class="fx" style="transform:scaleX(0.8826);margin-right:-1.83px">31</span></span></td><td><span class="bd pend"><span class="fx" style="transform:scaleX(1.0014);margin-right:0.09px">Pendiente</span></span></td><td></td><td><span class="bg"><span class="b"><svg class="" width="21" height="21" viewBox="0 0 24 24" fill="none" stroke="currentColor" stroke-width="1.78" stroke-linecap="round" stroke-linejoin="round" ><path d="M7 7h-1a2 2 0 0 0 -2 2v9a2 2 0 0 0 2 2h9a2 2 0 0 0 2 -2v-1"/><path d="M20.385 6.585a2.1 2.1 0 0 0 -2.97 -2.97l-8.415 8.385v3h3l8.385 -8.415z"/><path d="M16 5l3 3"/></svg></span><span class="b"><svg class="" width="21" height="21" viewBox="0 0 24 24" fill="none" stroke="currentColor" stroke-width="1.78" stroke-linecap="round" stroke-linejoin="round" ><path d="M17 17h2a2 2 0 0 0 2 -2v-4a2 2 0 0 0 -2 -2h-14a2 2 0 0 0 -2 2v4a2 2 0 0 0 2 2h2"/><path d="M17 9v-4a2 2 0 0 0 -2 -2h-6a2 2 0 0 0 -2 2v4"/><path d="M7 13m0 2a2 2 0 0 1 2 -2h6a2 2 0 0 1 2 2v4a2 2 0 0 1 -2 2h-6a2 2 0 0 1 -2 -2z"/></svg></span><span class="b"><svg class="" width="21" height="21" viewBox="0 0 24 24" fill="none" stroke="currentColor" stroke-width="1.78" stroke-linecap="round" stroke-linejoin="round" ><path d="M9 11l3 3l8 -8"/><path d="M20 12v6a2 2 0 0 1 -2 2h-12a2 2 0 0 1 -2 -2v-12a2 2 0 0 1 2 -2h9"/></svg></span></span></td></tr>
<tr><td><span class="nw"><a class="num"><span class="fx" style="transform:scaleX(0.9007);margin-right:-9.58px">PRUEBAS-014</span></a></span></td><td><span class="fx" style="transform:scaleX(1.0386);margin-right:2.72px">11-10-2025</span></td><td><span class="bd cli"><span class="fx" style="transform:scaleX(0.9310);margin-right:-12.50px">Construcciones López S.A.</span></span></td><td><span class="bd val"><span class="fx" style="transform:scaleX(1.0349);margin-right:1.90px">146,41 €</span></span></td><td><span class="bd trab"><span class="fx" style="transform:scaleX(1.0110);margin-right:0.17px">30</span></span></td><td><span class="bd pend"><span class="fx" style="transform:scaleX(1.0014);margin-right:0.09px">Pendiente</span></span></td><td></td><td><span class="bg"><span class="b"><svg class="" width="21" height="21" viewBox="0 0 24 24" fill="none" stroke="currentColor" stroke-width="1.78" stroke-linecap="round" stroke-linejoin="round" ><path d="M7 7h-1a2 2 0 0 0 -2 2v9a2 2 0 0 0 2 2h9a2 2 0 0 0 2 -2v-1"/><path d="M20.385 6.585a2.1 2.1 0 0 0 -2.97 -2.97l-8.415 8.385v3h3l8.385 -8.415z"/><path d="M16 5l3 3"/></svg></span><span class="b"><svg class="" width="21" height="21" viewBox="0 0 24 24" fill="none" stroke="currentColor" stroke-width="1.78" stroke-linecap="round" stroke-linejoin="round" ><path d="M17 17h2a2 2 0 0 0 2 -2v-4a2 2 0 0 0 -2 -2h-14a2 2 0 0 0 -2 2v4a2 2 0 0 0 2 2h2"/><path d="M17 9v-4a2 2 0 0 0 -2 -2h-6a2 2 0 0 0 -2 2v4"/><path d="M7 13m0 2a2 2 0 0 1 2 -2h6a2 2 0 0 1 2 2v4a2 2 0 0 1 -2 2h-6a2 2 0 0 1 -2 -2z"/></svg></span><span class="b"><svg class="" width="21" height="21" viewBox="0 0 24 24" fill="none" stroke="currentColor" stroke-width="1.78" stroke-linecap="round" stroke-linejoin="round" ><path d="M9 11l3 3l8 -8"/><path d="M20 12v6a2 2 0 0 1 -2 2h-12a2 2 0 0 1 -2 -2v-12a2 2 0 0 1 2 -2h9"/></svg></span></span></td></tr>
<tr><td><span class="nw"><a class="num"><span class="fx" style="transform:scaleX(0.9007);margin-right:-9.58px">PRUEBAS-013</span></a><span class="fl fr">R</span></span></td><td><span class="fx" style="transform:scaleX(1.0234);margin-right:1.67px">05-10-2025</span></td><td><span class="bd cli"><span class="fx" style="transform:scaleX(0.9310);margin-right:-12.50px">Construcciones López S.A.</span></span></td><td><span class="bd val"><span class="fx" style="transform:scaleX(1.0349);margin-right:1.90px">101,64 €</span></span></td><td><span class="bd trab"><span class="fx" style="transform:scaleX(1.0110);margin-right:0.17px">29</span></span></td><td><span class="bd pend"><span class="fx" style="transform:scaleX(1.0014);margin-right:0.09px">Pendiente</span></span></td><td></td><td><span class="bg"><span class="b"><svg class="" width="21" height="21" viewBox="0 0 24 24" fill="none" stroke="currentColor" stroke-width="1.78" stroke-linecap="round" stroke-linejoin="round" ><path d="M7 7h-1a2 2 0 0 0 -2 2v9a2 2 0 0 0 2 2h9a2 2 0 0 0 2 -2v-1"/><path d="M20.385 6.585a2.1 2.1 0 0 0 -2.97 -2.97l-8.415 8.385v3h3l8.385 -8.415z"/><path d="M16 5l3 3"/></svg></span><span class="b"><svg class="" width="21" height="21" viewBox="0 0 24 24" fill="none" stroke="currentColor" stroke-width="1.78" stroke-linecap="round" stroke-linejoin="round" ><path d="M17 17h2a2 2 0 0 0 2 -2v-4a2 2 0 0 0 -2 -2h-14a2 2 0 0 0 -2 2v4a2 2 0 0 0 2 2h2"/><path d="M17 9v-4a2 2 0 0 0 -2 -2h-6a2 2 0 0 0 -2 2v4"/><path d="M7 13m0 2a2 2 0 0 1 2 -2h6a2 2 0 0 1 2 2v4a2 2 0 0 1 -2 2h-6a2 2 0 0 1 -2 -2z"/></svg></span><span class="b"><svg class="" width="21" height="21" viewBox="0 0 24 24" fill="none" stroke="currentColor" stroke-width="1.78" stroke-linecap="round" stroke-linejoin="round" ><path d="M9 11l3 3l8 -8"/><path d="M20 12v6a2 2 0 0 1 -2 2h-12a2 2 0 0 1 -2 -2v-12a2 2 0 0 1 2 -2h9"/></svg></span></span></td></tr>
<tr><td><span class="nw"><a class="num"><span class="fx" style="transform:scaleX(0.9007);margin-right:-9.58px">PRUEBAS-012</span></a></span></td><td><span class="fx" style="transform:scaleX(1.0234);margin-right:1.67px">25-09-2025</span></td><td><span class="bd cli"><span class="fx" style="transform:scaleX(0.9761);margin-right:-2.95px">Ana Martínez Silva</span></span></td><td><span class="bd val"><span class="fx" style="transform:scaleX(1.0349);margin-right:1.90px">246,84 €</span></span></td><td><span class="bd trab"><span class="fx" style="transform:scaleX(1.0110);margin-right:0.17px">25</span></span></td><td><span class="bd pend"><span class="fx" style="transform:scaleX(1.0014);margin-right:0.09px">Pendiente</span></span></td><td></td><td><span class="bg"><span class="b"><svg class="" width="21" height="21" viewBox="0 0 24 24" fill="none" stroke="currentColor" stroke-width="1.78" stroke-linecap="round" stroke-linejoin="round" ><path d="M7 7h-1a2 2 0 0 0 -2 2v9a2 2 0 0 0 2 2h9a2 2 0 0 0 2 -2v-1"/><path d="M20.385 6.585a2.1 2.1 0 0 0 -2.97 -2.97l-8.415 8.385v3h3l8.385 -8.415z"/><path d="M16 5l3 3"/></svg></span><span class="b"><svg class="" width="21" height="21" viewBox="0 0 24 24" fill="none" stroke="currentColor" stroke-width="1.78" stroke-linecap="round" stroke-linejoin="round" ><path d="M17 17h2a2 2 0 0 0 2 -2v-4a2 2 0 0 0 -2 -2h-14a2 2 0 0 0 -2 2v4a2 2 0 0 0 2 2h2"/><path d="M17 9v-4a2 2 0 0 0 -2 -2h-6a2 2 0 0 0 -2 2v4"/><path d="M7 13m0 2a2 2 0 0 1 2 -2h6a2 2 0 0 1 2 2v4a2 2 0 0 1 -2 2h-6a2 2 0 0 1 -2 -2z"/></svg></span><span class="b"><svg class="" width="21" height="21" viewBox="0 0 24 24" fill="none" stroke="currentColor" stroke-width="1.78" stroke-linecap="round" stroke-linejoin="round" ><path d="M9 11l3 3l8 -8"/><path d="M20 12v6a2 2 0 0 1 -2 2h-12a2 2 0 0 1 -2 -2v-12a2 2 0 0 1 2 -2h9"/></svg></span></span></td></tr>
<tr><td><span class="nw"><a class="num"><span class="fx" style="transform:scaleX(0.8892);margin-right:-10.60px">PRUEBAS-011</span></a></span></td><td><span class="fx" style="transform:scaleX(1.0234);margin-right:1.67px">25-09-2025</span></td><td><span class="bd cli"><span class="fx" style="transform:scaleX(0.9761);margin-right:-2.95px">Ana Martínez Silva</span></span></td><td><span class="bd val"><span class="fx" style="transform:scaleX(1.0349);margin-right:1.90px">145,20 €</span></span></td><td><span class="bd trab"><span class="fx" style="transform:scaleX(0.8826);margin-right:-1.83px">12</span></span></td><td><svg class="chk" width="20.4" height="20.4" viewBox="0 0 24 24" fill="none" stroke="currentColor" stroke-width="1.9" stroke-linecap="round" stroke-linejoin="round" ><path d="M7 12l5 5l10 -10"/><path d="M2 12l5 5m5 -5l5 -5"/></svg></td><td></td><td><span class="bg"><span class="b"><svg class="" width="21" height="21" viewBox="0 0 24 24" fill="none" stroke="currentColor" stroke-width="1.78" stroke-linecap="round" stroke-linejoin="round" ><path d="M7 7h-1a2 2 0 0 0 -2 2v9a2 2 0 0 0 2 2h9a2 2 0 0 0 2 -2v-1"/><path d="M20.385 6.585a2.1 2.1 0 0 0 -2.97 -2.97l-8.415 8.385v3h3l8.385 -8.415z"/><path d="M16 5l3 3"/></svg></span><span class="b"><svg class="" width="21" height="21" viewBox="0 0 24 24" fill="none" stroke="currentColor" stroke-width="1.78" stroke-linecap="round" stroke-linejoin="round" ><path d="M17 17h2a2 2 0 0 0 2 -2v-4a2 2 0 0 0 -2 -2h-14a2 2 0 0 0 -2 2v4a2 2 0 0 0 2 2h2"/><path d="M17 9v-4a2 2 0 0 0 -2 -2h-6a2 2 0 0 0 -2 2v4"/><path d="M7 13m0 2a2 2 0 0 1 2 -2h6a2 2 0 0 1 2 2v4a2 2 0 0 1 -2 2h-6a2 2 0 0 1 -2 -2z"/></svg></span></span></td></tr>
<tr><td><span class="nw"><a class="num"><span class="fx" style="transform:scaleX(0.9007);margin-right:-9.58px">PRUEBAS-010</span></a><span class="fl fa">A</span></span></td><td><span class="fx" style="transform:scaleX(1.0234);margin-right:1.67px">23-09-2025</span></td><td><span class="bd cli"><span class="fx" style="transform:scaleX(0.9358);margin-right:-9.11px">Ayoze San Juan Cruz</span></span></td><td><span class="bd val"><span class="fx" style="transform:scaleX(1.0349);margin-right:1.90px">121,00 €</span></span></td><td><span class="bd trab"><span class="fx" style="transform:scaleX(1.0110);margin-right:0.17px">26</span></span></td><td><span class="bd anul"><span class="fx" style="transform:scaleX(0.9932);margin-right:-0.47px">ANULADA</span></span></td><td></td><td><span class="bg"><span class="b"><svg class="" width="21" height="21" viewBox="0 0 24 24" fill="none" stroke="currentColor" stroke-width="1.78" stroke-linecap="round" stroke-linejoin="round" ><path d="M7 7h-1a2 2 0 0 0 -2 2v9a2 2 0 0 0 2 2h9a2 2 0 0 0 2 -2v-1"/><path d="M20.385 6.585a2.1 2.1 0 0 0 -2.97 -2.97l-8.415 8.385v3h3l8.385 -8.415z"/><path d="M16 5l3 3"/></svg></span><span class="b"><svg class="" width="21" height="21" viewBox="0 0 24 24" fill="none" stroke="currentColor" stroke-width="1.78" stroke-linecap="round" stroke-linejoin="round" ><path d="M17 17h2a2 2 0 0 0 2 -2v-4a2 2 0 0 0 -2 -2h-14a2 2 0 0 0 -2 2v4a2 2 0 0 0 2 2h2"/><path d="M17 9v-4a2 2 0 0 0 -2 -2h-6a2 2 0 0 0 -2 2v4"/><path d="M7 13m0 2a2 2 0 0 1 2 -2h6a2 2 0 0 1 2 2v4a2 2 0 0 1 -2 2h-6a2 2 0 0 1 -2 -2z"/></svg></span></span></td></tr>
<tr><td><span class="nw"><a class="num"><span class="fx" style="transform:scaleX(1.0274);margin-right:0.64px">009</span></a><span class="fl fa">A</span></span></td><td><span class="fx" style="transform:scaleX(1.0234);margin-right:1.67px">17-09-2025</span></td><td><span class="bd cli"><span class="fx" style="transform:scaleX(0.9310);margin-right:-12.50px">Construcciones López S.A.</span></span></td><td><span class="bd val"><span class="fx" style="transform:scaleX(1.0349);margin-right:1.90px">208,64 €</span></span></td><td><span class="bd trab"><span class="fx" style="transform:scaleX(0.7257);margin-right:-4.06px">11</span></span></td><td><span class="bd anul"><span class="fx" style="transform:scaleX(0.9932);margin-right:-0.47px">ANULADA</span></span></td><td></td><td><span class="bg"><span class="b"><svg class="" width="21" height="21" viewBox="0 0 24 24" fill="none" stroke="currentColor" stroke-width="1.78" stroke-linecap="round" stroke-linejoin="round" ><path d="M7 7h-1a2 2 0 0 0 -2 2v9a2 2 0 0 0 2 2h9a2 2 0 0 0 2 -2v-1"/><path d="M20.385 6.585a2.1 2.1 0 0 0 -2.97 -2.97l-8.415 8.385v3h3l8.385 -8.415z"/><path d="M16 5l3 3"/></svg></span><span class="b"><svg class="" width="21" height="21" viewBox="0 0 24 24" fill="none" stroke="currentColor" stroke-width="1.78" stroke-linecap="round" stroke-linejoin="round" ><path d="M17 17h2a2 2 0 0 0 2 -2v-4a2 2 0 0 0 -2 -2h-14a2 2 0 0 0 -2 2v4a2 2 0 0 0 2 2h2"/><path d="M17 9v-4a2 2 0 0 0 -2 -2h-6a2 2 0 0 0 -2 2v4"/><path d="M7 13m0 2a2 2 0 0 1 2 -2h6a2 2 0 0 1 2 2v4a2 2 0 0 1 -2 2h-6a2 2 0 0 1 -2 -2z"/></svg></span></span></td></tr>
<tr><td><span class="nw"><a class="num"><span class="fx" style="transform:scaleX(1.0274);margin-right:0.64px">008</span></a></span></td><td><span class="fx" style="transform:scaleX(1.0234);margin-right:1.67px">14-09-2025</span></td><td><span class="bd cli"><span class="fx" style="transform:scaleX(0.9761);margin-right:-2.95px">Ana Martínez Silva</span></span></td><td><span class="bd val"><span class="fx" style="transform:scaleX(1.0349);margin-right:1.90px">145,20 €</span></span></td><td><span class="bd trab"><span class="fx" style="transform:scaleX(0.9940);margin-right:-0.05px">8</span></span></td><td><svg class="chk" width="20.4" height="20.4" viewBox="0 0 24 24" fill="none" stroke="currentColor" stroke-width="1.9" stroke-linecap="round" stroke-linejoin="round" ><path d="M7 12l5 5l10 -10"/><path d="M2 12l5 5m5 -5l5 -5"/></svg></td><td></td><td><span class="bg"><span class="b"><svg class="" width="21" height="21" viewBox="0 0 24 24" fill="none" stroke="currentColor" stroke-width="1.78" stroke-linecap="round" stroke-linejoin="round" ><path d="M7 7h-1a2 2 0 0 0 -2 2v9a2 2 0 0 0 2 2h9a2 2 0 0 0 2 -2v-1"/><path d="M20.385 6.585a2.1 2.1 0 0 0 -2.97 -2.97l-8.415 8.385v3h3l8.385 -8.415z"/><path d="M16 5l3 3"/></svg></span><span class="b"><svg class="" width="21" height="21" viewBox="0 0 24 24" fill="none" stroke="currentColor" stroke-width="1.78" stroke-linecap="round" stroke-linejoin="round" ><path d="M17 17h2a2 2 0 0 0 2 -2v-4a2 2 0 0 0 -2 -2h-14a2 2 0 0 0 -2 2v4a2 2 0 0 0 2 2h2"/><path d="M17 9v-4a2 2 0 0 0 -2 -2h-6a2 2 0 0 0 -2 2v4"/><path d="M7 13m0 2a2 2 0 0 1 2 -2h6a2 2 0 0 1 2 2v4a2 2 0 0 1 -2 2h-6a2 2 0 0 1 -2 -2z"/></svg></span></span></td></tr>
<tr><td><span class="nw"><a class="num"><span class="fx" style="transform:scaleX(1.0274);margin-right:0.64px">007</span></a></span></td><td><span class="fx" style="transform:scaleX(1.0234);margin-right:1.67px">25-03-2025</span></td><td><span class="bd cli"><span class="fx" style="transform:scaleX(0.9298);margin-right:-8.73px">Juan García López</span></span></td><td><span class="bd val"><span class="fx" style="transform:scaleX(1.0261);margin-right:1.73px">1.808,64 €</span></span></td><td><span class="bd trab"><span class="fx" style="transform:scaleX(0.8657);margin-right:-1.05px">7</span></span></td><td><svg class="chk" width="20.4" height="20.4" viewBox="0 0 24 24" fill="none" stroke="currentColor" stroke-width="1.9" stroke-linecap="round" stroke-linejoin="round" ><path d="M7 12l5 5l10 -10"/><path d="M2 12l5 5m5 -5l5 -5"/></svg></td><td><span class="fx" style="transform:scaleX(0.9897);margin-right:-0.51px">Efectivo</span></td><td><span class="bg"><span class="b"><svg class="" width="21" height="21" viewBox="0 0 24 24" fill="none" stroke="currentColor" stroke-width="1.78" stroke-linecap="round" stroke-linejoin="round" ><path d="M7 7h-1a2 2 0 0 0 -2 2v9a2 2 0 0 0 2 2h9a2 2 0 0 0 2 -2v-1"/><path d="M20.385 6.585a2.1 2.1 0 0 0 -2.97 -2.97l-8.415 8.385v3h3l8.385 -8.415z"/><path d="M16 5l3 3"/></svg></span><span class="b"><svg class="" width="21" height="21" viewBox="0 0 24 24" fill="none" stroke="currentColor" stroke-width="1.78" stroke-linecap="round" stroke-linejoin="round" ><path d="M17 17h2a2 2 0 0 0 2 -2v-4a2 2 0 0 0 -2 -2h-14a2 2 0 0 0 -2 2v4a2 2 0 0 0 2 2h2"/><path d="M17 9v-4a2 2 0 0 0 -2 -2h-6a2 2 0 0 0 -2 2v4"/><path d="M7 13m0 2a2 2 0 0 1 2 -2h6a2 2 0 0 1 2 2v4a2 2 0 0 1 -2 2h-6a2 2 0 0 1 -2 -2z"/></svg></span></span></td></tr>
<tr><td><span class="nw"><a class="num"><span class="fx" style="transform:scaleX(1.0274);margin-right:0.64px">006</span></a></span></td><td><span class="fx" style="transform:scaleX(1.0234);margin-right:1.67px">20-02-2025</span></td><td><span class="bd cli"><span class="fx" style="transform:scaleX(0.9480);margin-right:-8.88px">Tecnología Avanzada S.L.</span></span></td><td><span class="bd val"><span class="fx" style="transform:scaleX(1.0261);margin-right:1.93px">15.855,84 €</span></span></td><td><span class="bd trab"><span class="fx" style="transform:scaleX(0.9940);margin-right:-0.05px">6</span></span></td><td><svg class="chk" width="20.4" height="20.4" viewBox="0 0 24 24" fill="none" stroke="currentColor" stroke-width="1.9" stroke-linecap="round" stroke-linejoin="round" ><path d="M7 12l5 5l10 -10"/><path d="M2 12l5 5m5 -5l5 -5"/></svg></td><td></td><td><span class="bg"><span class="b"><svg class="" width="21" height="21" viewBox="0 0 24 24" fill="none" stroke="currentColor" stroke-width="1.78" stroke-linecap="round" stroke-linejoin="round" ><path d="M7 7h-1a2 2 0 0 0 -2 2v9a2 2 0 0 0 2 2h9a2 2 0 0 0 2 -2v-1"/><path d="M20.385 6.585a2.1 2.1 0 0 0 -2.97 -2.97l-8.415 8.385v3h3l8.385 -8.415z"/><path d="M16 5l3 3"/></svg></span><span class="b"><svg class="" width="21" height="21" viewBox="0 0 24 24" fill="none" stroke="currentColor" stroke-width="1.78" stroke-linecap="round" stroke-linejoin="round" ><path d="M17 17h2a2 2 0 0 0 2 -2v-4a2 2 0 0 0 -2 -2h-14a2 2 0 0 0 -2 2v4a2 2 0 0 0 2 2h2"/><path d="M17 9v-4a2 2 0 0 0 -2 -2h-6a2 2 0 0 0 -2 2v4"/><path d="M7 13m0 2a2 2 0 0 1 2 -2h6a2 2 0 0 1 2 2v4a2 2 0 0 1 -2 2h-6a2 2 0 0 1 -2 -2z"/></svg></span></span></td></tr>
<tr><td><span class="nw"><a class="num"><span class="fx" style="transform:scaleX(1.0274);margin-right:0.64px">005</span></a></span></td><td><span class="fx" style="transform:scaleX(1.0234);margin-right:1.67px">15-01-2025</span></td><td><span class="bd cli"><span class="fx" style="transform:scaleX(0.9761);margin-right:-2.95px">Ana Martínez Silva</span></span></td><td><span class="bd val"><span class="fx" style="transform:scaleX(1.0261);margin-right:1.73px">3.221,00 €</span></span></td><td><span class="bd trab"><span class="fx" style="transform:scaleX(0.9940);margin-right:-0.05px">5</span></span></td><td><svg class="chk" width="20.4" height="20.4" viewBox="0 0 24 24" fill="none" stroke="currentColor" stroke-width="1.9" stroke-linecap="round" stroke-linejoin="round" ><path d="M7 12l5 5l10 -10"/><path d="M2 12l5 5m5 -5l5 -5"/></svg></td><td><span class="fx" style="transform:scaleX(0.9709);margin-right:-2.48px">Transferencia</span></td><td><span class="bg"><span class="b"><svg class="" width="21" height="21" viewBox="0 0 24 24" fill="none" stroke="currentColor" stroke-width="1.78" stroke-linecap="round" stroke-linejoin="round" ><path d="M7 7h-1a2 2 0 0 0 -2 2v9a2 2 0 0 0 2 2h9a2 2 0 0 0 2 -2v-1"/><path d="M20.385 6.585a2.1 2.1 0 0 0 -2.97 -2.97l-8.415 8.385v3h3l8.385 -8.415z"/><path d="M16 5l3 3"/></svg></span><span class="b"><svg class="" width="21" height="21" viewBox="0 0 24 24" fill="none" stroke="currentColor" stroke-width="1.78" stroke-linecap="round" stroke-linejoin="round" ><path d="M17 17h2a2 2 0 0 0 2 -2v-4a2 2 0 0 0 -2 -2h-14a2 2 0 0 0 -2 2v4a2 2 0 0 0 2 2h2"/><path d="M17 9v-4a2 2 0 0 0 -2 -2h-6a2 2 0 0 0 -2 2v4"/><path d="M7 13m0 2a2 2 0 0 1 2 -2h6a2 2 0 0 1 2 2v4a2 2 0 0 1 -2 2h-6a2 2 0 0 1 -2 -2z"/></svg></span></span></td></tr>
<tr><td><span class="nw"><a class="num"><span class="fx" style="transform:scaleX(1.0274);margin-right:0.64px">004</span></a></span></td><td><span class="fx" style="transform:scaleX(1.0234);margin-right:1.67px">18-04-2024</span></td><td><span class="bd cli"><span class="fx" style="transform:scaleX(0.9310);margin-right:-12.50px">Construcciones López S.A.</span></span></td><td><span class="bd val"><span class="fx" style="transform:scaleX(1.0261);margin-right:1.73px">5.794,56 €</span></span></td><td><span class="bd trab"><span class="fx" style="transform:scaleX(0.9940);margin-right:-0.05px">4</span></span></td><td><svg class="chk" width="20.4" height="20.4" viewBox="0 0 24 24" fill="none" stroke="currentColor" stroke-width="1.9" stroke-linecap="round" stroke-linejoin="round" ><path d="M7 12l5 5l10 -10"/><path d="M2 12l5 5m5 -5l5 -5"/></svg></td><td><span class="fx" style="transform:scaleX(0.9897);margin-right:-0.51px">Efectivo</span></td><td><span class="bg"><span class="b"><svg class="" width="21" height="21" viewBox="0 0 24 24" fill="none" stroke="currentColor" stroke-width="1.78" stroke-linecap="round" stroke-linejoin="round" ><path d="M7 7h-1a2 2 0 0 0 -2 2v9a2 2 0 0 0 2 2h9a2 2 0 0 0 2 -2v-1"/><path d="M20.385 6.585a2.1 2.1 0 0 0 -2.97 -2.97l-8.415 8.385v3h3l8.385 -8.415z"/><path d="M16 5l3 3"/></svg></span><span class="b"><svg class="" width="21" height="21" viewBox="0 0 24 24" fill="none" stroke="currentColor" stroke-width="1.78" stroke-linecap="round" stroke-linejoin="round" ><path d="M17 17h2a2 2 0 0 0 2 -2v-4a2 2 0 0 0 -2 -2h-14a2 2 0 0 0 -2 2v4a2 2 0 0 0 2 2h2"/><path d="M17 9v-4a2 2 0 0 0 -2 -2h-6a2 2 0 0 0 -2 2v4"/><path d="M7 13m0 2a2 2 0 0 1 2 -2h6a2 2 0 0 1 2 2v4a2 2 0 0 1 -2 2h-6a2 2 0 0 1 -2 -2z"/></svg></span></span></td></tr>
<tr><td><span class="nw"><a class="num"><span class="fx" style="transform:scaleX(1.0274);margin-right:0.64px">003</span></a></span></td><td><span class="fx" style="transform:scaleX(1.0234);margin-right:1.67px">10-03-2024</span></td><td><span class="bd cli"><span class="fx" style="transform:scaleX(0.9932);margin-right:-1.05px">María Rodríguez Martín</span></span></td><td><span class="bd val"><span class="fx" style="transform:scaleX(1.0261);margin-right:1.73px">3.221,00 €</span></span></td><td><span class="bd trab"><span class="fx" style="transform:scaleX(0.9940);margin-right:-0.05px">3</span></span></td><td><svg class="chk" width="20.4" height="20.4" viewBox="0 0 24 24" fill="none" stroke="currentColor" stroke-width="1.9" stroke-linecap="round" stroke-linejoin="round" ><path d="M7 12l5 5l10 -10"/><path d="M2 12l5 5m5 -5l5 -5"/></svg></td><td><span class="fx" style="transform:scaleX(0.9709);margin-right:-2.48px">Transferencia</span></td><td><span class="bg"><span class="b"><svg class="" width="21" height="21" viewBox="0 0 24 24" fill="none" stroke="currentColor" stroke-width="1.78" stroke-linecap="round" stroke-linejoin="round" ><path d="M7 7h-1a2 2 0 0 0 -2 2v9a2 2 0 0 0 2 2h9a2 2 0 0 0 2 -2v-1"/><path d="M20.385 6.585a2.1 2.1 0 0 0 -2.97 -2.97l-8.415 8.385v3h3l8.385 -8.415z"/><path d="M16 5l3 3"/></svg></span><span class="b"><svg class="" width="21" height="21" viewBox="0 0 24 24" fill="none" stroke="currentColor" stroke-width="1.78" stroke-linecap="round" stroke-linejoin="round" ><path d="M17 17h2a2 2 0 0 0 2 -2v-4a2 2 0 0 0 -2 -2h-14a2 2 0 0 0 -2 2v4a2 2 0 0 0 2 2h2"/><path d="M17 9v-4a2 2 0 0 0 -2 -2h-6a2 2 0 0 0 -2 2v4"/><path d="M7 13m0 2a2 2 0 0 1 2 -2h6a2 2 0 0 1 2 2v4a2 2 0 0 1 -2 2h-6a2 2 0 0 1 -2 -2z"/></svg></span></span></td></tr>
<tr><td><span class="nw"><a class="num"><span class="fx" style="transform:scaleX(1.0274);margin-right:0.64px">002</span></a></span></td><td><span class="fx" style="transform:scaleX(1.0234);margin-right:1.67px">20-02-2024</span></td><td><span class="bd cli"><span class="fx" style="transform:scaleX(0.9480);margin-right:-8.88px">Tecnología Avanzada S.L.</span></span></td><td><span class="bd val"><span class="fx" style="transform:scaleX(1.0261);margin-right:1.73px">7.607,04 €</span></span></td><td><span class="bd trab"><span class="fx" style="transform:scaleX(0.9940);margin-right:-0.05px">2</span></span></td><td><svg class="chk" width="20.4" height="20.4" viewBox="0 0 24 24" fill="none" stroke="currentColor" stroke-width="1.9" stroke-linecap="round" stroke-linejoin="round" ><path d="M7 12l5 5l10 -10"/><path d="M2 12l5 5m5 -5l5 -5"/></svg></td><td><span class="fx" style="transform:scaleX(0.9802);margin-right:-0.83px">Tarjeta</span></td><td><span class="bg"><span class="b"><svg class="" width="21" height="21" viewBox="0 0 24 24" fill="none" stroke="currentColor" stroke-width="1.78" stroke-linecap="round" stroke-linejoin="round" ><path d="M7 7h-1a2 2 0 0 0 -2 2v9a2 2 0 0 0 2 2h9a2 2 0 0 0 2 -2v-1"/><path d="M20.385 6.585a2.1 2.1 0 0 0 -2.97 -2.97l-8.415 8.385v3h3l8.385 -8.415z"/><path d="M16 5l3 3"/></svg></span><span class="b"><svg class="" width="21" height="21" viewBox="0 0 24 24" fill="none" stroke="currentColor" stroke-width="1.78" stroke-linecap="round" stroke-linejoin="round" ><path d="M17 17h2a2 2 0 0 0 2 -2v-4a2 2 0 0 0 -2 -2h-14a2 2 0 0 0 -2 2v4a2 2 0 0 0 2 2h2"/><path d="M17 9v-4a2 2 0 0 0 -2 -2h-6a2 2 0 0 0 -2 2v4"/><path d="M7 13m0 2a2 2 0 0 1 2 -2h6a2 2 0 0 1 2 2v4a2 2 0 0 1 -2 2h-6a2 2 0 0 1 -2 -2z"/></svg></span></span></td></tr>
<tr><td><span class="nw"><a class="num"><span class="fx" style="transform:scaleX(0.8862);margin-right:-2.66px">001</span></a></span></td><td><span class="fx" style="transform:scaleX(1.0234);margin-right:1.67px">15-01-2024</span></td><td><span class="bd cli"><span class="fx" style="transform:scaleX(0.9298);margin-right:-8.73px">Juan García López</span></span></td><td><span class="bd val"><span class="fx" style="transform:scaleX(1.0261);margin-right:1.73px">3.221,00 €</span></span></td><td><span class="bd trab"><span class="fx" style="transform:scaleX(0.7375);margin-right:-2.05px">1</span></span></td><td><svg class="chk" width="20.4" height="20.4" viewBox="0 0 24 24" fill="none" stroke="currentColor" stroke-width="1.9" stroke-linecap="round" stroke-linejoin="round" ><path d="M7 12l5 5l10 -10"/><path d="M2 12l5 5m5 -5l5 -5"/></svg></td><td><span class="fx" style="transform:scaleX(0.9709);margin-right:-2.48px">Transferencia</span></td><td><span class="bg"><span class="b"><svg class="" width="21" height="21" viewBox="0 0 24 24" fill="none" stroke="currentColor" stroke-width="1.78" stroke-linecap="round" stroke-linejoin="round" ><path d="M7 7h-1a2 2 0 0 0 -2 2v9a2 2 0 0 0 2 2h9a2 2 0 0 0 2 -2v-1"/><path d="M20.385 6.585a2.1 2.1 0 0 0 -2.97 -2.97l-8.415 8.385v3h3l8.385 -8.415z"/><path d="M16 5l3 3"/></svg></span><span class="b"><svg class="" width="21" height="21" viewBox="0 0 24 24" fill="none" stroke="currentColor" stroke-width="1.78" stroke-linecap="round" stroke-linejoin="round" ><path d="M17 17h2a2 2 0 0 0 2 -2v-4a2 2 0 0 0 -2 -2h-14a2 2 0 0 0 -2 2v4a2 2 0 0 0 2 2h2"/><path d="M17 9v-4a2 2 0 0 0 -2 -2h-6a2 2 0 0 0 -2 2v4"/><path d="M7 13m0 2a2 2 0 0 1 2 -2h6a2 2 0 0 1 2 2v4a2 2 0 0 1 -2 2h-6a2 2 0 0 1 -2 -2z"/></svg></span></span></td></tr>
</tbody></table></div>
<div id="info"><span class="fx" style="transform:scaleX(1.0774);margin-right:26.72px">Mostrando registros del <b>1</b> al <b>19</b> de un total de <b>19</b> registros</span></div>
<div id="pag"><span class="pg">&lt;</span><span class="pg cur">1</span><span class="pg">&gt;</span></div>
</div>
<div id="sb"><i class="au"></i><i class="th"></i><i class="ad"></i></div>
</body></html>
